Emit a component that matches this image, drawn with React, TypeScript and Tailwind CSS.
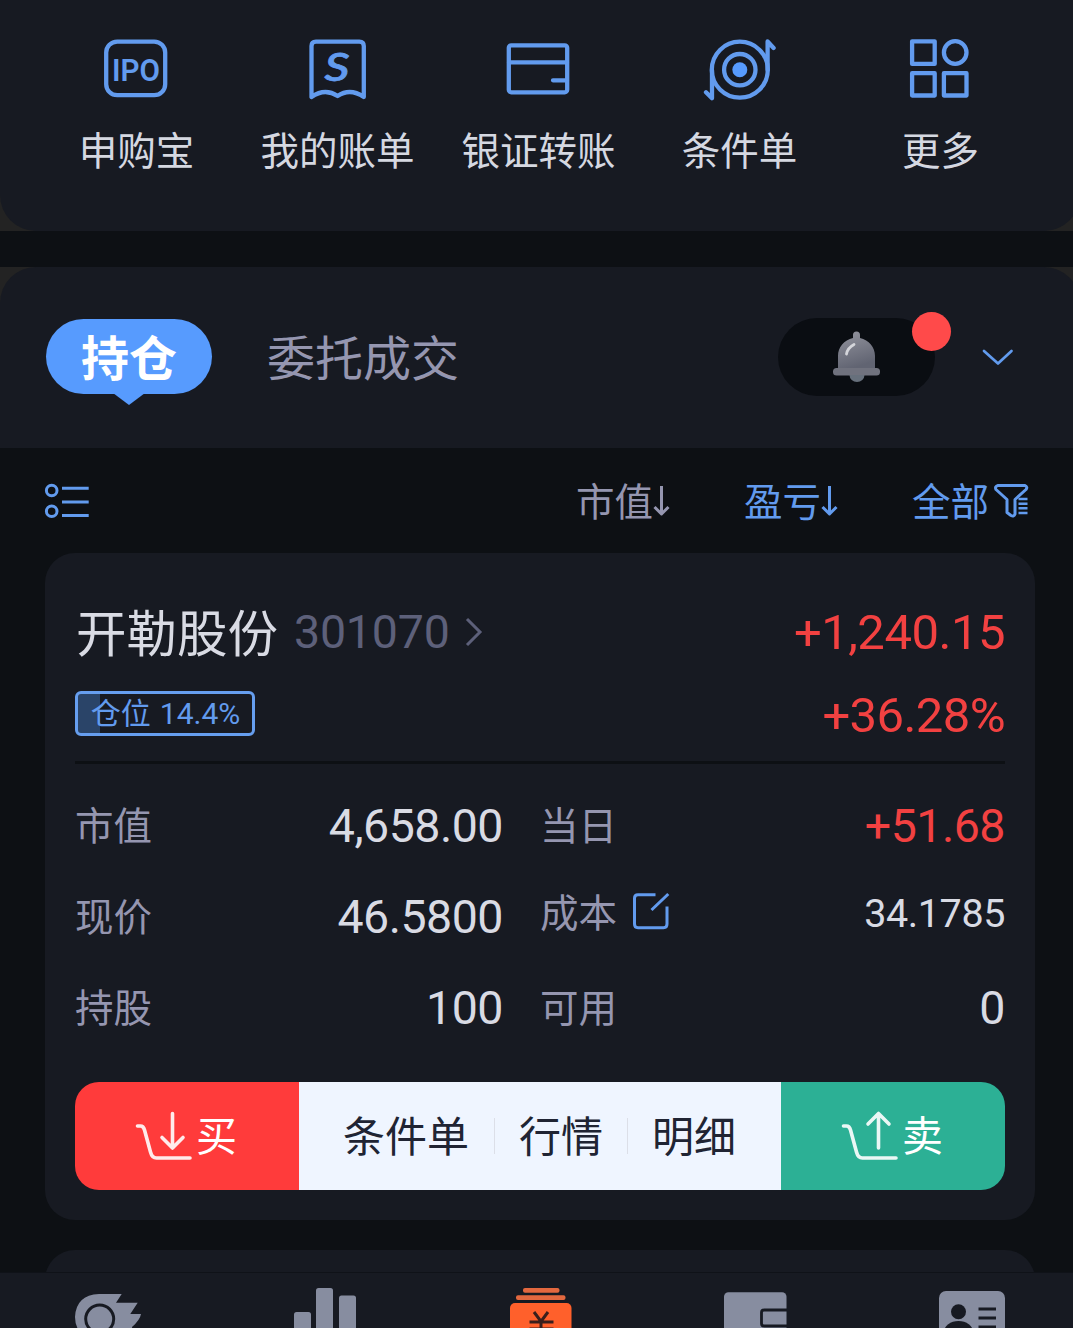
import React from "react";

const BLUE = "#629bee";

type Shortcut = { label: string; viewBox: string; icon: React.ReactNode };

const shortcuts: Shortcut[] = [
  {
    label: "申购宝",
    viewBox: "100 33 73 72",
    icon: (
      <>
        <rect x="106.2" y="41.6" width="59" height="53.6" rx="11" />
        <text
          x="112"
          y="81"
          textLength="48"
          lengthAdjust="spacingAndGlyphs"
          fill={BLUE}
          stroke="none"
          fontFamily="Roboto, sans-serif"
          fontWeight="600"
          fontSize="32"
        >
          IPO
        </text>
      </>
    ),
  },
  {
    label: "我的账单",
    viewBox: "301 33 73 72",
    icon: (
      <>
        <path d="M311.5 97V46q0-4.4 4.4-4.4h43.5q4.4 0 4.4 4.4V97Q350 87.500 337.600 96Q325 87.500 311.500 97Z" />
        <text
          x="324.500"
          y="80.500"
          textLength="25"
          lengthAdjust="spacingAndGlyphs"
          fill={BLUE}
          stroke={BLUE}
          strokeWidth="0.8"
          fontFamily="Lato, sans-serif"
          fontWeight="500"
          fontStyle="italic"
          fontSize="38"
        >
          S
        </text>
      </>
    ),
  },
  {
    label: "银证转账",
    viewBox: "502 33 73 72",
    icon: (
      <>
        <rect x="508.800" y="45.300" width="58.400" height="47" rx="2.500" />
        <path d="M509 62.300h58M567 80.300h-14" />
      </>
    ),
  },
  {
    label: "条件单",
    viewBox: "703 33 73 72",
    icon: (
      <>
        <circle cx="739.800" cy="69.700" r="28" />
        <circle cx="739.800" cy="69.700" r="15.700" />
        <circle cx="739.800" cy="69.700" r="7.500" fill="#579bfe" stroke="none" />
        <path d="M767.600 70V41.500l6 6.500M712 70v28.300l-6-6" />
      </>
    ),
  },
  {
    label: "更多",
    viewBox: "904 33 73 72",
    icon: (
      <>
        <rect x="912.100" y="41.300" width="22.600" height="22.600" />
        <circle cx="955.200" cy="52.500" r="11.300" />
        <rect x="912.100" y="73.200" width="22.600" height="22.300" />
        <rect x="943.900" y="73.200" width="22.600" height="22.300" />
      </>
    ),
  },
];

function Shortcuts() {
  return (
    <div className="w-[1080px] bg-[#232323]">
      <section className="flex h-[231px] rounded-b-[36px] bg-[#171a22] pt-[33px] pl-9">
        {shortcuts.map((s) => (
          <div key={s.label} className="flex w-[201px] shrink-0 flex-col items-center">
            <svg
              className="h-[72px] w-[73px]"
              viewBox={s.viewBox}
              fill="none"
              stroke={BLUE}
              strokeWidth="4.3"
              strokeLinecap="round"
              strokeLinejoin="round"
            >
              {s.icon}
            </svg>
            <span className="mt-[15px] h-14 text-[38.5px] leading-[56px] whitespace-nowrap text-[#d5d8e1]">{s.label}</span>
          </div>
        ))}
      </section>
    </div>
  );
}

function Tabs() {
  return (
    <div className="w-[1080px] bg-[#232323]">
      <section className="flex h-[181px] items-start rounded-t-[36px] bg-[#171a22] pl-[46px]">
        <div className="relative mt-[52px] h-[75px] w-[166px] rounded-full bg-[#579bfe] text-center text-[48px] leading-[72px] font-bold text-white">
          持仓
          <svg className="absolute top-[74px] left-[67px] h-3 w-8" viewBox="0 0 32 12" fill="#579bfe">
            <path d="M0 0h32L16 12Z" />
          </svg>
        </div>
        <div className="mt-[52px] ml-[55px] text-[48px] leading-[72px] text-[#9596b0]">委托成交</div>
        <div className="relative mt-[51px] ml-auto h-[78px] w-[157px] rounded-full bg-[#0a0d12]">
          <svg className="absolute top-[10px] left-[50px] h-[58px] w-[56px]" viewBox="828 328 56 58">
            <defs>
              <linearGradient id="bell" x1="0" y1="0" x2="0.3" y2="1">
                <stop offset="0" stopColor="#94959f" />
                <stop offset="1" stopColor="#616472" />
              </linearGradient>
            </defs>
            <g fill="url(#bell)">
              <path d="M853 338v-3a3.500 3.500 0 0 1 7 0v3c9 2 15 9 15 18v13h-37v-13c0-9 6-16 15-18Z" />
              <rect x="833" y="368" width="47" height="7.500" rx="3.500" fill="#70727e" />
              <path d="M849.500 375h15a7.500 7 0 0 1-15 0Z" fill="#67707c" />
            </g>
            <path d="M846.500 354q1-6 7.500-9.500" fill="none" stroke="#d4d5da" strokeWidth="2.800" strokeLinecap="round" />
          </svg>
          <span className="absolute -top-[6px] left-[134px] size-[39px] rounded-full bg-[#ff4a4a]" />
        </div>
        <svg
          className="mt-[78px] mr-[63px] ml-[44px] h-6 w-[38px]"
          viewBox="979 345 38 24"
          fill="none"
          stroke={BLUE}
          strokeWidth="2.700"
          strokeLinecap="round"
          strokeLinejoin="round"
        >
          <path d="M984 351l14 12.500 13.500-12.500" />
        </svg>
      </section>
    </div>
  );
}

function SortArrow({ color }: { color: string }) {
  return (
    <svg className="mt-[3px] h-9 w-[18px]" viewBox="0 0 18 36" fill="none" stroke={color} strokeWidth="3" strokeLinejoin="round">
      <path d="M8.500 4v28M1.500 25l7 7 7-7" />
    </svg>
  );
}

function Toolbar() {
  return (
    <div className="flex h-[105px] items-center pb-1 pl-11 text-[38.5px] leading-[56px]">
      <svg className="mt-[7px] h-10 w-[46px]" viewBox="44 482 46 40" fill="none" stroke={BLUE} strokeWidth="3">
        <circle cx="51.700" cy="490.500" r="5.300" />
        <circle cx="51.700" cy="511.300" r="5.300" />
        <path d="M62 488.300h26.700M62 502h26.700M62 515.600h26.700" />
      </svg>
      <div className="ml-[486px] flex w-[168px] items-center text-[#9596b0]">
        市值
        <SortArrow color="#9596b0" />
      </div>
      <div className="flex w-[168px] items-center text-[#629bee]">
        盈亏
        <SortArrow color={BLUE} />
      </div>
      <div className="flex items-center text-[#629bee]">
        全部
        <svg className="mt-[2px] ml-[3px] h-10 w-[38px]" viewBox="992 480 38 40" fill="none" stroke={BLUE} strokeWidth="3" strokeLinejoin="round">
          <path d="M998 485.500h27q3 1.500 1 4l-11 10v14.500q-1 3-4 1.500l-4-3v-13l-11-10q-1.500-3 2-4Z" />
          <path d="M1018.500 499h9M1018.500 503.700h9M1018.500 508.300h9M1018.500 513h9" strokeWidth="2.400" />
        </svg>
      </div>
    </div>
  );
}

function Cart({ up = false }: { up?: boolean }) {
  return (
    <svg
      className="h-[52px] w-[60px]"
      viewBox="134 1110 60 52"
      fill="none"
      stroke="#fff"
      strokeOpacity="0.9"
      strokeWidth="3.600"
      strokeLinecap="round"
      strokeLinejoin="round"
    >
      <path d="M137.500 1126h3q3 0 4 4l6 22q1.500 6 6 6h33.500" />
      {up ? <path d="M172.500 1148v-34.500M162 1124l10.500-10.500 10.500 10.500" /> : <path d="M172.500 1113.500v34.500M162 1137.500l10.500 10.500 10.500-10.500" />}
    </svg>
  );
}

function Label({ children }: { children: React.ReactNode }) {
  return <span className="text-[38.5px] text-[#9596b0]">{children}</span>;
}

const num = "pt-1.5 font-[Roboto,sans-serif] text-[46.5px] tracking-[-0.5px] text-[#d9dbe4]";

function Holding() {
  return (
    <article className="mx-[45px] h-[667px] w-[990px] rounded-[30px] bg-[#171a22] px-[30px]">
      <div className="flex h-[130px] items-center pt-[24px]">
        <span className="ml-px text-[50.5px] leading-none text-[#d9dbe4]">开勒股份</span>
        <span className="ml-[16px] pt-1 font-[Roboto,sans-serif] text-[46.5px] leading-none tracking-[-0.2px] text-[#5d607a]">301070</span>
        <svg className="mt-[3px] ml-[12px] h-9 w-6" viewBox="463 614 24 36" fill="none" stroke="#5d607a" strokeWidth="3">
          <path d="M468 619l13 13-13 13" />
        </svg>
        <span className="ml-auto pt-1 font-[Roboto,sans-serif] text-[49px] leading-none tracking-[-0.5px] text-[#f24141]">+1,240.15</span>
      </div>
      <div className="flex h-[78px] items-start justify-between">
        <div className="mt-2 flex h-[45px] w-[180px] items-center justify-center rounded-md border-[3px] border-[#669eef] bg-linear-to-r from-[#2a4468] from-[22px] to-transparent to-[22px] pl-px font-[Roboto,'Noto_Sans_CJK_SC',sans-serif] text-[30px] leading-none whitespace-pre text-[#629bee]">
          仓位<span className="ml-[9px]">14.4%</span>
        </div>
        <span className="mt-[8px] font-[Roboto,sans-serif] text-[49px] leading-[50px] tracking-[-0.6px] text-[#f24141]">+36.28%</span>
      </div>
      <div className="h-[3px] bg-[#0d1014]" />
      <div className="mt-[14px] grid auto-rows-[91px] grid-cols-[428px_465px] gap-x-[37px] leading-none">
        <div className="flex items-center justify-between">
          <Label>市值</Label>
          <span className={num}>4,658.00</span>
        </div>
        <div className="flex items-center justify-between">
          <Label>当日</Label>
          <span className="pt-1.5 font-[Roboto,sans-serif] text-[46.5px] tracking-[-0.5px] text-[#f24141]">+51.68</span>
        </div>
        <div className="flex items-center justify-between">
          <Label>现价</Label>
          <span className={num}>46.5800</span>
        </div>
        <div className="flex items-center pb-2">
          <Label>成本</Label>
          <svg className="ml-[14px] h-10 w-10" viewBox="631 891 40 40" fill="none" stroke={BLUE} strokeWidth="3">
            <path d="M655.500 894.700H638q-3.500 0-3.500 3.500V924q0 3.700 3.500 3.700h25.500q3.500 0 3.500-3.700v-17.500M651.500 910l16.800-16" />
          </svg>
          <span className="ml-auto pt-[6px] font-[Roboto,sans-serif] text-[39.5px] tracking-[-0.4px] text-[#d9dbe4]">34.1785</span>
        </div>
        <div className="flex items-center justify-between">
          <Label>持股</Label>
          <span className={num}>100</span>
        </div>
        <div className="flex items-center justify-between">
          <Label>可用</Label>
          <span className={num}>0</span>
        </div>
      </div>
      <div className="mt-[31px] flex h-[108px] overflow-hidden rounded-3xl text-[42px] leading-none">
        <button className="flex w-[224px] items-center bg-[#ff3b3b] pl-[59px] text-white">
          <Cart />
          <span className="ml-[2px] pb-[6px] text-[41px]">买</span>
        </button>
        <div className="flex w-[482px] items-center bg-[#eff5ff] pb-[5px] pl-11 text-[#202433]">
          <span>条件单</span>
          <i className="mr-[24px] ml-[25px] mt-1 h-9 w-px bg-[#dcdfe8]" />
          <span>行情</span>
          <i className="mx-[24px] mt-1 h-9 w-px bg-[#dcdfe8]" />
          <span>明细</span>
        </div>
        <button className="flex w-[224px] items-center bg-[#2cb095] pl-[59px] text-white">
          <Cart up />
          <span className="ml-[2px] pb-[6px] text-[41px]">卖</span>
        </button>
      </div>
    </article>
  );
}

function BottomNav() {
  const cls = "h-[55px] w-[72px] shrink-0";
  const gray = "#878da0";
  const dark = "#171a22";
  return (
    <nav className="flex h-14 gap-36 border-t border-[#0f1218] bg-[#171a22] pl-[72px]">
      <svg className={cls} viewBox="72 1273 72 55" fill={gray}>
        <path d="M99 1294h22.700l-5.700 8.700h21.700l-7.400 11.300h10.700q-1 6-9 13l1 8H82q-7-8-7-18 1-22 24-23Z" />
        <circle cx="99.700" cy="1319" r="14" fill="none" stroke={dark} strokeWidth="3" />
      </svg>
      <svg className={cls} viewBox="288 1273 72 55" fill={gray}>
        <rect x="294" y="1312" width="17" height="30" rx="2.500" />
        <rect x="316" y="1288" width="17" height="50" rx="2.500" />
        <rect x="339" y="1295.500" width="17" height="50" rx="2.500" />
      </svg>
      <svg className={cls} viewBox="504 1273 72 55" fill="#ff602b">
        <rect x="523" y="1288" width="36.500" height="4.800" rx="2" fill="#e3683f" />
        <rect x="516" y="1295.300" width="49.500" height="4.800" rx="2" fill="#e3683f" />
        <rect x="510" y="1303" width="61.500" height="40" rx="5" />
        <path d="M534 1312l7 9.500 7-9.500M529.500 1322h24M529.500 1329h24M541 1321v12" fill="none" stroke="#3a1f1c" strokeWidth="3" />
      </svg>
      <svg className={cls} viewBox="720 1273 72 55" fill={gray}>
        <rect x="724" y="1292.300" width="62.500" height="50" rx="4.500" />
        <path d="M788 1310h-24q-2.500 0-2.500 2.500v11q0 2.500 2.500 2.500h24" fill="none" stroke={dark} strokeWidth="2.800" />
      </svg>
      <svg className={cls} viewBox="936 1273 72 55" fill={gray}>
        <rect x="939" y="1291" width="66" height="50" rx="7" />
        <g fill={dark}>
          <circle cx="958.500" cy="1311.800" r="7.500" />
          <ellipse cx="958.500" cy="1332" rx="14.500" ry="11" />
        </g>
        <path d="M978.500 1309h17.500M978.500 1318h17.500M978.500 1327h17.500" stroke={dark} strokeWidth="2.800" />
      </svg>
    </nav>
  );
}

export default function App() {
  return (
    <main className="h-[1328px] w-[1073px] overflow-hidden bg-[#0d1014] font-['Noto_Sans_CJK_SC',sans-serif]">
      <Shortcuts />
      <div className="h-9" />
      <Tabs />
      <Toolbar />
      <Holding />
      <div className="mx-[45px] mt-[30px] h-[22px] w-[990px] overflow-hidden">
        <div className="h-20 rounded-[30px] bg-[#171a22]" />
      </div>
      <BottomNav />
    </main>
  );
}
